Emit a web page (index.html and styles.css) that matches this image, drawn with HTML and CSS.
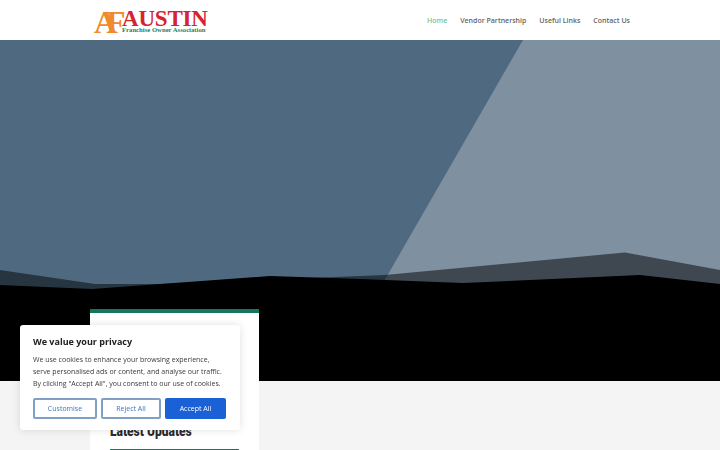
FILE: index.html
```html
<!DOCTYPE html>
<html>
<head>
    <title>Austin Franchise Owner Association</title>
    <link rel="stylesheet" href="styles.css">
</head>
<body>
    <header class="topbar">
        <a class="logo" href="#">
            <span class="logo-mark">AF</span>
            <span class="logo-words">
                <span class="logo-name">AUSTIN</span>
                <span class="logo-sub">Franchise Owner Association</span>
            </span>
        </a>
        <nav class="menu">
            <a class="active" href="#">Home</a>
            <a href="#">Vendor Partnership</a>
            <a href="#">Useful Links</a>
            <a href="#">Contact Us</a>
        </nav>
    </header>

    <section class="hero">
        <svg class="hero-shapes" width="720" height="341" viewBox="0 40 720 341">
            <rect x="0" y="40" width="720" height="341" fill="#4f6a80"/>
            <polygon points="523,40 720,40 720,290 379,290" fill="#7f90a1"/>
            <polygon points="0,270 95,284 160,284 385,275 625,252.500 720,270 720,300 0,300" fill="#000" fill-opacity="0.5"/>
            <polygon points="0,285 92,289 270,276 360,279 463,283 640,275 720,284 720,381 0,381" fill="#000"/>
        </svg>
    </section>

    <main class="content">
        <aside class="card">
            <h2>Latest Updates</h2>
            <div class="card-rule"></div>
        </aside>
    </main>

    <div class="cookie-box">
        <h3>We value your privacy</h3>
        <p>We use cookies to enhance your browsing experience, serve personalised ads or content, and analyse our traffic. By clicking "Accept All", you consent to our use of cookies.</p>
        <div class="cookie-buttons">
            <button class="btn-outline btn-custom">Customise</button>
            <button class="btn-outline btn-reject">Reject All</button>
            <button class="btn-accept">Accept All</button>
        </div>
    </div>
</body>
</html>
```

FILE: styles.css
```css
html, body {
    height: 450px;
    overflow: hidden;
}
body {
    margin: 0;
    background-color: #f4f4f4;
    font-family: "Open Sans", "Noto Sans", sans-serif;
}
a {
    text-decoration: none;
}
.topbar {
    height: 40px;
    background-color: white;
    display: flex;
    align-items: center;
    justify-content: space-between;
    padding: 0 90px 0 94px;
}
.logo {
    display: flex;
    align-items: flex-start;
    height: 26px;
    font-family: "Liberation Serif", serif;
    font-weight: bold;
}
.logo-mark {
    width: 28px;
    margin-top: 2px;
    font-size: 32px;
    line-height: 27px;
    color: #f08a2c;
    letter-spacing: -11px;
}
.logo-words {
    display: flex;
    flex-direction: column;
    margin-top: 3px;
}
.logo-name {
    font-size: 23px;
    line-height: 17px;
    letter-spacing: -0.2px;
    color: #d8222f;
}
.logo-sub {
    font-size: 6.700px;
    line-height: 6px;
    color: #1f7f64;
    white-space: nowrap;
}
.menu {
    display: flex;
    gap: 13px;
    font-size: 7px;
    font-weight: 600;
}
.menu a {
    color: #666;
}
.menu a.active {
    color: #7cc08e;
}
.hero {
    height: 341px;
    background-color: black;
}
.hero-shapes {
    display: block;
}
.content {
    padding: 0 90px;
    margin-top: -72px;
}
.card {
    position: relative;
    width: 169px;
    height: 200px;
    box-sizing: border-box;
    background-color: white;
    border-top: 4px solid #14775c;
    padding: 108px 20px 0;
}
.card h2 {
    margin: 0;
    font-family: Roboto, "Liberation Sans", sans-serif;
    font-weight: 900;
    font-size: 14px;
    line-height: 20px;
    color: #2b2b2b;
    white-space: nowrap;
    transform: scaleX(0.86);
    transform-origin: left;
}
.card-rule {
    margin-top: 8px;
    height: 2px;
    background-color: #14775c;
}
.cookie-box {
    position: fixed;
    left: 20px;
    top: 325px;
    width: 220px;
    height: 105px;
    box-sizing: border-box;
    padding: 11px 13px;
    background-color: white;
    border-radius: 3px;
    box-shadow: 0 0 8px rgba(0, 0, 0, 0.12);
}
.cookie-box h3 {
    margin: 0 0 6px;
    font-size: 9px;
    line-height: 12px;
    color: #212121;
}
.cookie-box p {
    margin: 0;
    font-size: 7px;
    line-height: 12px;
    color: #3a3a3a;
}
.cookie-buttons {
    display: flex;
    gap: 4px;
    margin-top: 8px;
}
.cookie-buttons button {
    height: 21px;
    padding: 0;
    font-family: inherit;
    font-size: 7px;
    font-weight: 500;
    border-radius: 2px;
}
.btn-outline {
    background-color: transparent;
    border: 2px solid #7f9fc6;
    color: #3f76bd;
}
.btn-custom {
    width: 64px;
}
.btn-reject {
    width: 60px;
}
.btn-accept {
    width: 61px;
    background-color: #1a60d6;
    border: none;
    color: white;
}
```
